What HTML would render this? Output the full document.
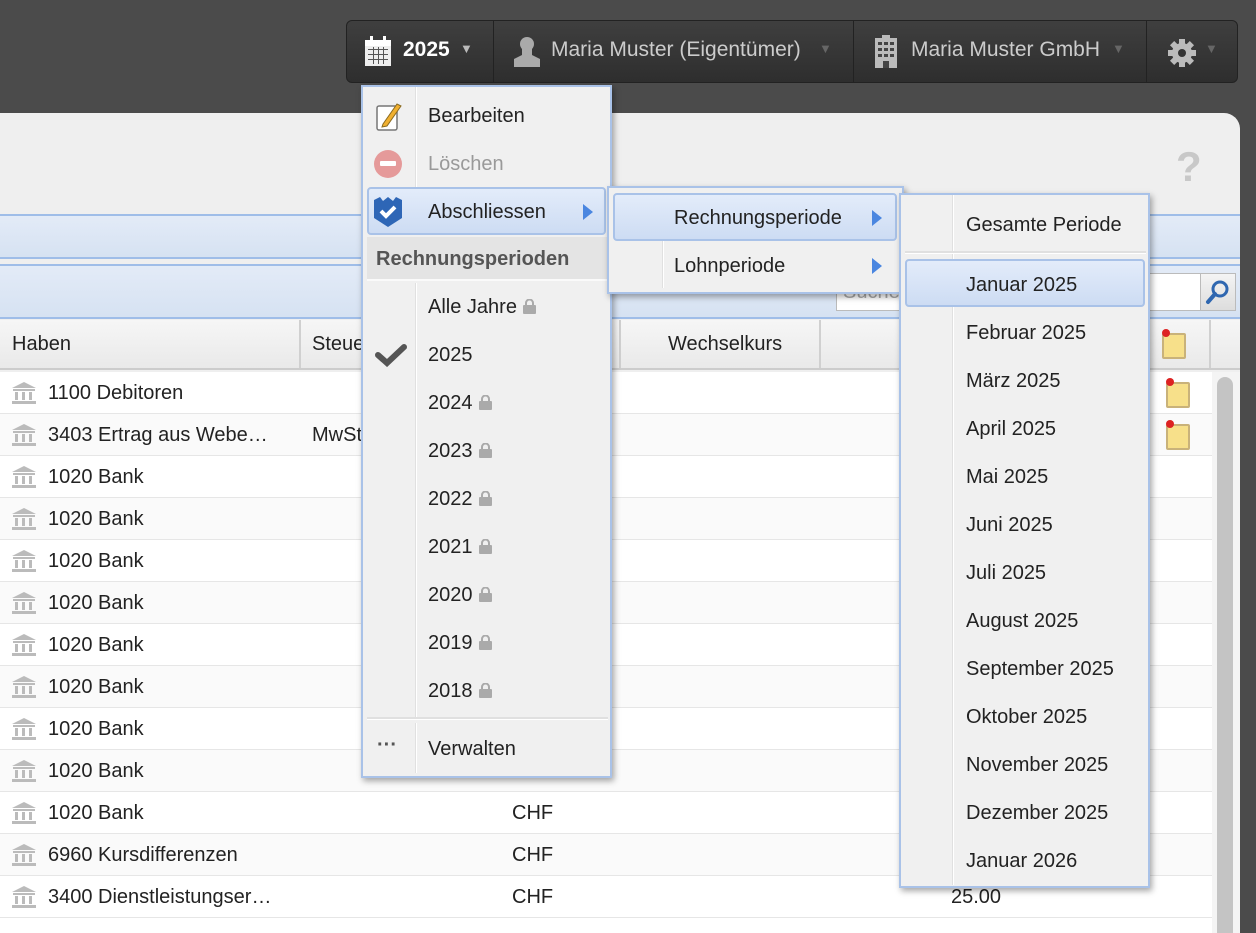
<!DOCTYPE html>
<html><head><meta charset="utf-8">
<style>
*{box-sizing:border-box;margin:0;padding:0}
body{width:1256px;height:920px;overflow:hidden;background:#4b4b4b;font-family:"Liberation Sans",sans-serif;font-size:20px;color:#222;position:relative}
.abs{position:absolute}
.tb{position:absolute;top:20px;height:63px;background:linear-gradient(#3f3f3f,#2e2e2e);border:1px solid #222;color:#ccc;display:flex;align-items:center;font-size:21px}
.panel{position:absolute;left:0;top:113px;width:1240px;height:820px;background:#efefef;border-top-right-radius:16px;overflow:hidden}
.row{position:absolute;left:0;width:1212px;height:42px;border-bottom:1px solid #e6e6e6;line-height:42px}
.row span{position:absolute}
.bank{position:absolute;left:12px;top:10px}
.menu{position:absolute;background:#f0f0f0;border:2px solid #a9c2e8;box-shadow:2px 3px 6px rgba(0,0,0,.35)}
.it{position:absolute;left:0;right:0;height:48px;line-height:48px}
.hl{position:absolute;background:linear-gradient(#e3ecfa,#cddcf3);border:2px solid #a9c2e8;border-radius:4px}
.lock{display:inline-block;width:13px;height:15px;position:relative;top:1px;margin-left:6px}
.arr{position:absolute;width:0;height:0;border-top:8px solid transparent;border-bottom:8px solid transparent;border-left:10px solid #4a86e0}
</style></head><body>

<div class="tb" style="left:346px;width:148px;border-radius:6px 0 0 6px;color:#fff">
 <svg class="abs" style="left:18px;top:15px" width="26" height="30" viewBox="0 0 26 30"><rect x="0" y="4" width="26" height="26" fill="#eee"/><rect x="0" y="4" width="26" height="6" fill="#fff"/><rect x="5" y="0" width="3" height="7" fill="#fff"/><rect x="18" y="0" width="3" height="7" fill="#fff"/><g fill="#555"><rect x="3" y="13" width="20" height="1"/><rect x="3" y="18" width="20" height="1"/><rect x="3" y="23" width="20" height="1"/><rect x="8" y="11" width="1" height="17"/><rect x="13" y="11" width="1" height="17"/><rect x="18" y="11" width="1" height="17"/></g></svg>
 <span class="abs" style="left:56px;top:17px;font-weight:bold">2025</span>
 <span class="abs" style="left:113px;top:20px;font-size:13px;color:#bbb">▼</span>
</div>
<div class="tb" style="left:493px;width:361px">
 <svg class="abs" style="left:18px;top:14px" width="30" height="32" viewBox="0 0 30 32"><circle cx="15" cy="9" r="7" fill="#aaa"/><path d="M10 12 L10 20 L2 24 L2 32 L28 32 L28 24 L20 20 L20 12Z" fill="#aaa"/></svg>
 <span class="abs" style="left:57px;top:17px">Maria Muster (Eigentümer)</span>
 <span class="abs" style="left:325px;top:20px;font-size:13px;color:#666">▼</span>
</div>
<div class="tb" style="left:853px;width:294px">
 <svg class="abs" style="left:18px;top:14px" width="28" height="33" viewBox="0 0 28 33"><rect x="3" y="3" width="22" height="30" fill="#bbb"/><rect x="10" y="0" width="8" height="4" fill="#bbb"/><g fill="#444"><rect x="6" y="7" width="4" height="3"/><rect x="12" y="7" width="4" height="3"/><rect x="18" y="7" width="4" height="3"/><rect x="6" y="13" width="4" height="3"/><rect x="12" y="13" width="4" height="3"/><rect x="18" y="13" width="4" height="3"/><rect x="6" y="19" width="4" height="3"/><rect x="12" y="19" width="4" height="3"/><rect x="18" y="19" width="4" height="3"/><rect x="11" y="26" width="6" height="7"/></g></svg>
 <span class="abs" style="left:57px;top:17px">Maria Muster GmbH</span>
 <span class="abs" style="left:258px;top:20px;font-size:13px;color:#666">▼</span>
</div>
<div class="tb" style="left:1146px;width:92px;border-radius:0 6px 6px 0">
 <svg class="abs" style="left:20px;top:17px" width="30" height="30" viewBox="0 0 30 30"><g fill="#bbb" transform="translate(15 15)"><circle r="10"/><g id="t"><rect x="-3" y="-14" width="6" height="6"/></g><use href="#t" transform="rotate(45)"/><use href="#t" transform="rotate(90)"/><use href="#t" transform="rotate(135)"/><use href="#t" transform="rotate(180)"/><use href="#t" transform="rotate(225)"/><use href="#t" transform="rotate(270)"/><use href="#t" transform="rotate(315)"/></g><circle cx="15" cy="15" r="4" fill="#333"/></svg>
 <span class="abs" style="left:58px;top:20px;font-size:13px;color:#666">▼</span>
</div>

<div class="panel">
 <span class="abs" style="left:1176px;top:30px;font-size:42px;color:#c8c8c8;font-weight:bold">?</span>
 <div class="abs" style="left:0;top:101px;width:1240px;height:45px;background:linear-gradient(#e3ebf7,#d6e2f2);border-top:2px solid #9fbde8;border-bottom:2px solid #9fbde8"></div>
 <div class="abs" style="left:0;top:151px;width:1240px;height:55px;background:linear-gradient(#e3ebf7,#d6e2f2);border-top:2px solid #9fbde8;border-bottom:2px solid #9fbde8"></div>
 <div class="abs" style="left:836px;top:160px;width:366px;height:38px;background:#fff;border:1px solid #bbb;color:#aaa;line-height:36px;padding-left:6px">Suche</div>
 <div class="abs" style="left:1200px;top:160px;width:36px;height:38px;background:linear-gradient(#f4f4f4,#ddd);border:1px solid #bbb"><svg width="34" height="36" viewBox="0 0 34 36"><circle cx="19" cy="15" r="7" fill="none" stroke="#2f67b0" stroke-width="3"/><path d="M14 20 L7 28" stroke="#2f67b0" stroke-width="4" stroke-linecap="round"/></svg></div>
 <div class="abs" style="left:0;top:207px;width:1240px;height:50px;background:linear-gradient(#f6f6f6,#e9e9e9);border-bottom:2px solid #ccc">
  <span class="abs" style="left:12px;top:13px">Haben</span>
  <div class="abs" style="left:299px;top:0;width:2px;height:48px;background:#d0d0d0"></div>
  <span class="abs" style="left:312px;top:13px">Steuer</span>
  <div class="abs" style="left:619px;top:0;width:2px;height:48px;background:#d0d0d0"></div>
  <span class="abs" style="left:668px;top:13px">Wechselkurs</span>
  <div class="abs" style="left:819px;top:0;width:2px;height:48px;background:#d0d0d0"></div>
  <div class="abs" style="left:1209px;top:0;width:2px;height:48px;background:#d0d0d0"></div>
  <div class="abs" style="left:1162px;top:13px;width:24px;height:26px;background:#f7e08a;border:2px solid #c9b27a;border-radius:2px"></div>
  <div class="abs" style="left:1162px;top:9px;width:8px;height:8px;background:#d22;border-radius:50%"></div>
 </div>
 <div class="abs" style="left:0;top:259px;width:1240px;height:600px;background:#fff"></div>
 <div class="abs" style="left:1212px;top:259px;width:28px;height:600px;background:#f4f4f4"></div>
 <div class="abs" style="left:1217px;top:264px;width:16px;height:600px;background:#c4c4c4;border-radius:8px"></div>
</div>

<div id="rows"></div>
<script>
var d=[["1100 Debitoren","","",""],["3403 Ertrag aus Webe…","MwSt","",""],["1020 Bank"],["1020 Bank"],["1020 Bank"],["1020 Bank"],["1020 Bank"],["1020 Bank"],["1020 Bank"],["1020 Bank"],["1020 Bank","","CHF"],["6960 Kursdifferenzen","","CHF"],["3400 Dienstleistungser…","","CHF","25.00"]];
var h="";
for(var i=0;i<d.length;i++){var r=d[i],y=372+i*42;
h+='<div class="row" style="top:'+y+'px;background:'+(i%2?'#fafafa':'#fff')+'">'+
'<svg class="bank" width="24" height="22" viewBox="0 0 24 22"><path d="M12 0 L24 6 L0 6Z" fill="#bbb"/><rect x="1" y="7" width="22" height="2" fill="#bbb"/><rect x="3" y="10" width="3" height="8" fill="#bbb"/><rect x="10" y="10" width="3" height="8" fill="#bbb"/><rect x="17" y="10" width="3" height="8" fill="#bbb"/><rect x="0" y="19" width="24" height="3" fill="#bbb"/></svg>'+
'<span style="left:48px">'+r[0]+'</span>'+(r[1]?'<span style="left:312px">'+r[1]+'</span>':'')+(r[2]?'<span style="left:512px">'+r[2]+'</span>':'')+(r[3]?'<span style="left:951px">'+r[3]+'</span>':'')+
((i<2)?'<div style="position:absolute;left:1166px;top:10px;width:24px;height:26px;background:#f7e08a;border:2px solid #c9b27a;border-radius:2px"></div><div style="position:absolute;left:1166px;top:6px;width:8px;height:8px;background:#d22;border-radius:50%"></div>':'')+
'</div>';}
document.getElementById('rows').innerHTML=h;
</script>

<div class="menu" style="left:361px;top:85px;width:251px;height:693px">
 <div class="abs" style="left:52px;top:0;width:2px;height:148px;background:#e0e0e0;border-right:1px solid #fff"></div>
 <div class="abs" style="left:52px;top:196px;width:2px;height:435px;background:#e0e0e0;border-right:1px solid #fff"></div>
 <div class="abs" style="left:52px;top:636px;width:2px;height:50px;background:#e0e0e0;border-right:1px solid #fff"></div>
 <div class="it" style="top:5px"><svg class="abs" style="left:12px;top:10px" width="28" height="30" viewBox="0 0 28 30"><rect x="2" y="4" width="20" height="24" rx="2" fill="#fff" stroke="#777" stroke-width="1.5"/><path d="M8 22 L22 2 L26 4 L12 24 L7 25Z" fill="#f0b030" stroke="#8a6a20"/></svg><span class="abs" style="left:65px">Bearbeiten</span></div>
 <div class="it" style="top:53px"><svg class="abs" style="left:10px;top:9px" width="30" height="30"><circle cx="15" cy="15" r="14" fill="#e59a9a"/><rect x="7" y="12" width="16" height="5" rx="1" fill="#fff"/></svg><span class="abs" style="left:65px;color:#999">Löschen</span></div>
 <div class="hl" style="left:4px;top:100px;width:239px;height:48px"></div>
 <div class="it" style="top:101px"><svg class="abs" style="left:10px;top:8px" width="30" height="32" viewBox="0 0 30 32"><path d="M1 4 L7 1 L10 5 L15 1 L20 5 L23 1 L29 4 L29 22 L15 31 L1 22Z" fill="#2e66b6"/><path d="M8 15 L13 20 L22 11" stroke="#fff" stroke-width="4" fill="none"/></svg><span class="abs" style="left:65px">Abschliessen</span><div class="arr" style="left:220px;top:16px"></div></div>
 <div class="abs" style="left:4px;top:150px;width:241px;height:44px;background:#e4e4e4;border-bottom:2px solid #fafafa;line-height:44px;font-weight:bold;color:#555;padding-left:9px">Rechnungsperioden</div>
 <div class="it" style="top:196px"><span class="abs" style="left:65px">Alle Jahre<svg class="lock" viewBox="0 0 13 15"><path d="M3 7 V4 a3.5 3.5 0 0 1 7 0 V7" stroke="#aaa" stroke-width="2" fill="none"/><rect y="6" width="13" height="9" rx="1" fill="#aaa"/></svg></span></div>
 <div class="it" style="top:244px"><svg class="abs" style="left:12px;top:12px" width="32" height="24" viewBox="0 0 32 24"><path d="M3 12 L12 20 L29 4" stroke="#555" stroke-width="6" fill="none" stroke-linecap="round"/></svg><span class="abs" style="left:65px">2025</span></div>
 <div id="yrs"></div>
 <div class="abs" style="left:4px;top:630px;width:241px;height:3px;background:#e0e0e0;border-bottom:1px solid #fff"></div>
 <div class="it" style="top:638px"><span class="abs" style="left:14px;top:-4px;color:#555;font-weight:bold">···</span><span class="abs" style="left:65px">Verwalten</span></div>
</div>
<script>
var s="";["2024","2023","2022","2021","2020","2019","2018"].forEach(function(y,i){s+='<div class="it" style="top:'+(292+i*48)+'px"><span class="abs" style="left:65px">'+y+'<svg class="lock" viewBox="0 0 13 15"><path d="M3 7 V4 a3.5 3.5 0 0 1 7 0 V7" stroke="#aaa" stroke-width="2" fill="none"/><rect y="6" width="13" height="9" rx="1" fill="#aaa"/></svg></span></div>'});
document.getElementById('yrs').outerHTML=s;
</script>

<div class="menu" style="left:607px;top:186px;width:297px;height:108px">
 <div class="abs" style="left:53px;top:50px;width:2px;height:50px;background:#e0e0e0;border-right:1px solid #fff"></div>
 <div class="hl" style="left:4px;top:5px;width:284px;height:48px"></div>
 <div class="it" style="top:6px"><span class="abs" style="left:65px">Rechnungsperiode</span><div class="arr" style="left:263px;top:16px"></div></div>
 <div class="it" style="top:54px"><span class="abs" style="left:65px">Lohnperiode</span><div class="arr" style="left:263px;top:16px"></div></div>
</div>

<div class="menu" style="left:899px;top:193px;width:251px;height:695px">
 <div class="abs" style="left:51px;top:0;width:2px;height:690px;background:#e0e0e0;border-right:1px solid #fff"></div>
 <div class="it" style="top:6px"><span class="abs" style="left:65px">Gesamte Periode</span></div>
 <div class="abs" style="left:4px;top:56px;width:241px;height:3px;background:#e0e0e0;border-bottom:1px solid #fff"></div>
 <div class="hl" style="left:4px;top:64px;width:240px;height:48px"></div>
 <div id="mon"></div>
</div>
<script>
var m=["Januar 2025","Februar 2025","März 2025","April 2025","Mai 2025","Juni 2025","Juli 2025","August 2025","September 2025","Oktober 2025","November 2025","Dezember 2025","Januar 2026"],t="";
m.forEach(function(x,i){t+='<div class="it" style="top:'+(66+i*48)+'px"><span class="abs" style="left:65px">'+x+'</span></div>'});
document.getElementById('mon').outerHTML=t;
</script>
</body></html>
